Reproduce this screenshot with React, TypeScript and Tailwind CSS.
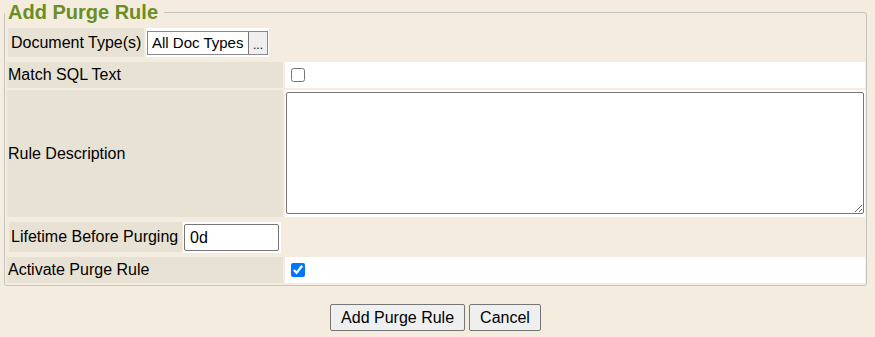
const labelCell = "flex items-center bg-[#e8e2d4] pl-[1px] text-[16px] text-black";

export default function App() {
  return (
    <div className="min-h-[337px] w-[875px] bg-[#f4eddf] font-['Liberation_Sans',Arial,sans-serif] text-black">
      <fieldset className="ml-[4px] w-[863px] rounded-[3px] border border-[#c6c4bf] pb-[2px]">
        <legend className="ml-0 pl-[3px] pr-[6px] text-[20px] font-bold leading-[24px] text-[#6a8e23]">
          Add Purge Rule
        </legend>

        {/* document types */}
        <div className="mt-[4px] ml-[3px] flex gap-[2px]">
          <div className="flex h-[29px] w-[136px] items-center bg-[#e8e2d4] pl-[3px] text-[16px]">
            Document Type(s)
          </div>
          <div className="flex h-[29px] w-[123px] items-center bg-white pl-[1px]">
            <div className="flex h-[24px] items-stretch border border-[#8a8a8a]">
              <span className="flex w-[100px] items-center pl-[4px] pt-[1px] text-[15px]">All Doc Types</span>
              <button className="flex w-[19px] items-end justify-center border-l border-[#767676] bg-[#efefef] pb-[3px] text-[12px] leading-none">
                ...
              </button>
            </div>
          </div>
        </div>

        {/* match sql */}
        <div className="mt-[5px] ml-[2px] flex gap-[2px]">
          <div className={`${labelCell} h-[26px] w-[276px]`}>Match SQL Text</div>
          <div className="flex h-[26px] w-[580px] items-center bg-white pl-[6px]">
            <input type="checkbox" className="m-0 h-[14px] w-[14px]" />
          </div>
        </div>

        {/* description */}
        <div className="mt-[2px] ml-[2px] flex gap-[2px]">
          <div className={`${labelCell} h-[127px] w-[276px]`}>Rule Description</div>
          <div className="h-[127px] w-[580px] bg-white pl-[1px] pt-[2px]">
            <textarea className="block h-[122px] w-[578px] resize-y rounded-[2px] border border-[#767676] bg-white p-[2px] text-[14px] outline-none" />
          </div>
        </div>

        {/* lifetime */}
        <div className="mt-[5px] ml-[4px] flex gap-[1px]">
          <div className="flex h-[30px] w-[173px] items-center bg-[#e8e2d4] pl-[2px] text-[16px]">
            Lifetime Before Purging
          </div>
          <div className="flex h-[31px] w-[98px] items-center bg-white pl-[1px]">
            <input
              defaultValue="0d"
              className="h-[27px] w-[95px] rounded-[2px] border border-[#767676] bg-white px-[5px] text-[16px] outline-none"
            />
          </div>
        </div>

        {/* activate */}
        <div className="mt-[4px] ml-[2px] flex gap-[2px]">
          <div className={`${labelCell} h-[26px] w-[276px]`}>Activate Purge Rule</div>
          <div className="flex h-[26px] w-[580px] items-center bg-white pl-[6px]">
            <input type="checkbox" defaultChecked className="m-0 h-[14px] w-[14px]" />
          </div>
        </div>
      </fieldset>

      <div className="mt-[18px] flex w-[871px] justify-center gap-[4px]">
        <button className="h-[27px] rounded-[2px] border border-[#767676] bg-[#efefef] px-[10px] text-[16px]">
          Add Purge Rule
        </button>
        <button className="h-[27px] rounded-[2px] border border-[#767676] bg-[#efefef] px-[10px] text-[16px]">
          Cancel
        </button>
      </div>
    </div>
  );
}
